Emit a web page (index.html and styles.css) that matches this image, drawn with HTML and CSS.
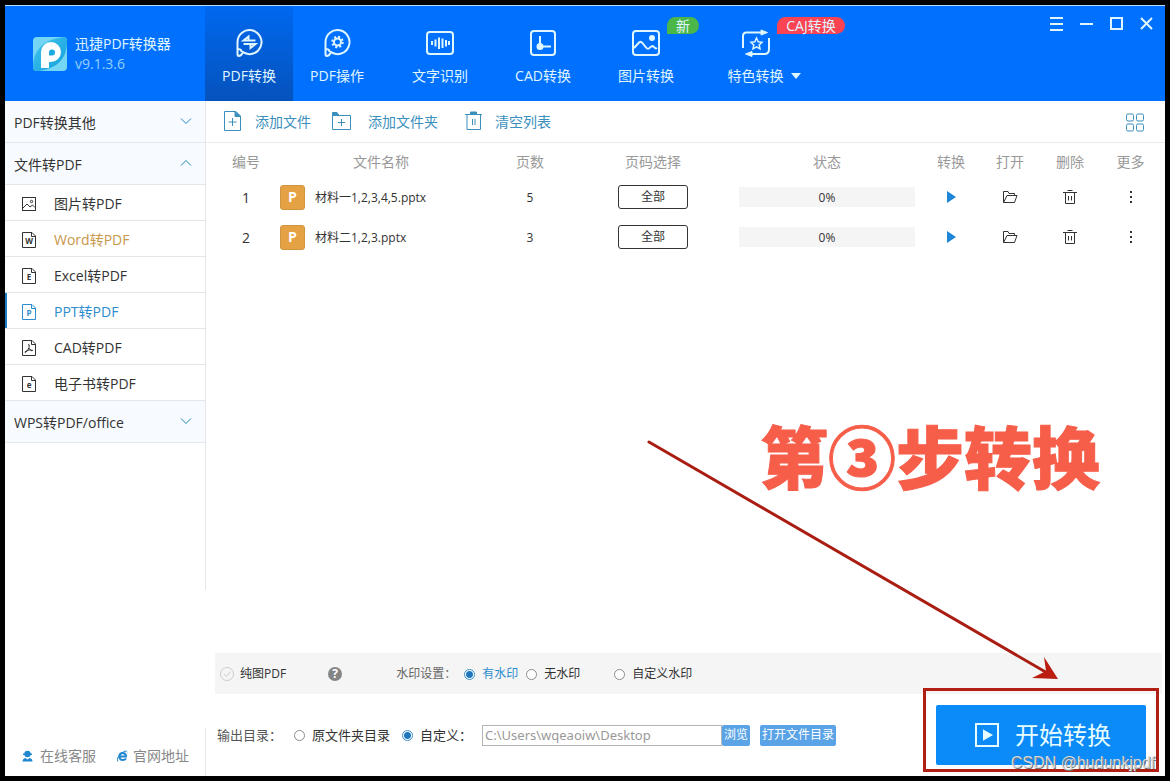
FILE: index.html
```html
<!DOCTYPE html>
<html lang="zh-CN">
<head>
<meta charset="utf-8">
<meta name="viewport" content="width=device-width, initial-scale=1">
<title>迅捷PDF转换器</title>
<link rel="stylesheet" href="styles.css">
</head>
<body>
<div class="app">
  <header class="header">
    <div class="brand">
      <svg class="logo" viewBox="0 0 34 34" aria-hidden="true">
        <defs><linearGradient id="lg" x1="0" y1="0" x2="1" y2="1"><stop offset="0" stop-color="#43c4ee"/><stop offset="1" stop-color="#12a0dc"/></linearGradient></defs>
        <rect width="34" height="34" rx="4" fill="#74d6f4"/>
        <path d="M0 30C0 12 12 2 31 0Q34 0 34 4C34 20 26 31 6 34H4Q0 34 0 30Z" fill="url(#lg)"/>
        <path d="M8 31V15A10 10 0 1 1 18 25H16V31Z" fill="#fff"/>
        <path d="M16 19V15.500A3 3 0 1 1 19 18.500H16Z" fill="#1ba9e1"/>
      </svg>
      <div class="brand-text">
        <h1 class="brand-name">迅捷PDF转换器</h1>
        <p class="brand-version">v9.1.3.6</p>
      </div>
    </div>
    <nav class="tabs">
      <button class="tab tab-active" type="button">
        <svg class="tab-icon" viewBox="0 0 28 28"><path d="M2.500 26V14A12 12 0 1 1 8 24.200Q6 28 3.800 28Q2.300 28 2.500 25M2.500 21.500Q6.500 20.500 6.500 24"/><path d="M20.500 12.500H8.500L13.500 8.500V12M8.500 16H20.500L15.500 20V16.500"/></svg>
        <span>PDF转换</span>
      </button>
      <button class="tab" type="button">
        <svg class="tab-icon" viewBox="0 0 28 28"><path d="M2.500 26V14A12 12 0 1 1 8 24.200Q6 28 3.800 28Q2.300 28 2.500 25M2.500 21.500Q6.500 20.500 6.500 24"/><circle cx="14.500" cy="14" r="3.500"/><circle cx="14.500" cy="14" r="5.200" stroke-dasharray="2.040 2.040" stroke-width="2"/></svg>
        <span>PDF操作</span>
      </button>
      <button class="tab tab-wide" type="button">
        <svg class="tab-icon" viewBox="0 0 28 28"><rect x="1" y="4" width="26" height="22" rx="3"/><path d="M6 13V17M9.500 11.500V18.500M13 9.500V21M16.500 10.500V20M20 12V18.500M23 13V17"/></svg>
        <span>文字识别</span>
      </button>
      <button class="tab" type="button">
        <svg class="tab-icon" viewBox="0 0 28 28"><rect x="2" y="3" width="24" height="24" rx="3"/><path d="M11 8V21M11 18.500H22"/><circle cx="11" cy="18.500" r="2.500" fill="currentColor"/></svg>
        <span>CAD转换</span>
      </button>
      <button class="tab tab-wide" type="button">
        <svg class="tab-icon" viewBox="0 0 28 28"><rect x="1" y="3" width="26" height="24" rx="3"/><path d="M2 20L7 14.500Q9 13 10.500 15L14 19.500Q16 22 18 19.500L19.500 18.500Q21 17.500 22.500 19.500Q23.500 21 25 20"/><circle cx="20" cy="10" r="2" fill="currentColor"/></svg>
        <span>图片转换</span>
        <span class="badge badge-new">新</span>
      </button>
      <button class="tab tab-wide tab-menu" type="button">
        <svg class="tab-icon" viewBox="0 0 28 28"><path d="M1 20V8Q1 4.500 4.500 4.500H21M27 10V21Q27 26 22.500 26H8"/><path d="M19 2L25.500 4.500L19 7ZM10 23.500L3.500 26L10 28.500Z" fill="currentColor" stroke-width="1"/><path d="M14.500 10L16.200 13.700L20 14.200L17.200 16.900L18 20.800L14.500 18.900L11 20.800L11.800 16.900L9 14.200L12.800 13.700Z" stroke-width="1.500"/></svg>
        <span>特色转换</span>
        <svg class="caret" viewBox="0 0 10 6"><path d="M0 0H10L5 6Z" fill="currentColor"/></svg>
        <span class="badge badge-caj">CAJ转换</span>
      </button>
    </nav>
    <div class="window-controls">
      <button class="win-btn" type="button" aria-label="菜单"><svg viewBox="0 0 14 14"><path d="M0 1H13M0 7H13M0 13H13"/></svg></button>
      <button class="win-btn" type="button" aria-label="最小化"><svg viewBox="0 0 14 14"><path d="M0 7H13"/></svg></button>
      <button class="win-btn" type="button" aria-label="最大化"><svg viewBox="0 0 14 14"><rect x="1" y="1" width="11" height="11"/></svg></button>
      <button class="win-btn" type="button" aria-label="关闭"><svg viewBox="0 0 14 14"><path d="M1 1L12 12M12 1L1 12"/></svg></button>
    </div>
  </header>

  <div class="body">
    <aside class="sidebar">
      <nav class="side-nav">
        <button class="group" type="button"><span>PDF转换其他</span><svg class="chevron" viewBox="0 0 12 8"><path d="M1 1.500L6 6.500L11 1.500"/></svg></button>
        <button class="group" type="button"><span>文件转PDF</span><svg class="chevron" viewBox="0 0 12 8"><path d="M1 6.500L6 1.500L11 6.500"/></svg></button>
        <ul class="side-list">
          <li><a class="side-item" href="#"><svg class="doc" viewBox="0 0 16 16"><rect x="1.500" y="1.500" width="13" height="13"/><path d="M2 12L6 8L9 11L11.500 9L14 11.500"/><circle cx="10.500" cy="5.500" r="1.200"/></svg>图片转PDF</a></li>
          <li><a class="side-item side-item-hover" href="#"><svg class="doc" viewBox="0 0 16 16"><path d="M1.500 .5H11L14.500 4V15.500H1.500ZM10.500 .5V4.500H14.500"/><text x="8" y="12" class="doc-letter">W</text></svg><span>Word转PDF</span></a></li>
          <li><a class="side-item" href="#"><svg class="doc" viewBox="0 0 16 16"><path d="M1.500 .5H11L14.500 4V15.500H1.500ZM10.500 .5V4.500H14.500"/><text x="8" y="12" class="doc-letter">E</text></svg>Excel转PDF</a></li>
          <li><a class="side-item side-item-active" href="#"><svg class="doc" viewBox="0 0 16 16"><path d="M1.500 .5H11L14.500 4V15.500H1.500ZM10.500 .5V4.500H14.500"/><text x="8" y="12" class="doc-letter">P</text></svg>PPT转PDF</a></li>
          <li><a class="side-item" href="#"><svg class="doc" viewBox="0 0 16 16"><path d="M1.500 .5H11L14.500 4V15.500H1.500ZM10.500 .5V4.500H14.500"/><path d="M7 4.500Q9 4 8 7.500Q7 11 4.500 12.500Q3 12.500 5 11Q8 9 12 10.500M7.800 8Q9 10 11 11"/></svg>CAD转PDF</a></li>
          <li><a class="side-item" href="#"><svg class="doc" viewBox="0 0 16 16"><path d="M1.500 .5H11L14.500 4V15.500H1.500ZM10.500 .5V4.500H14.500"/><text x="8" y="12" class="doc-letter">e</text></svg>电子书转PDF</a></li>
        </ul>
        <button class="group" type="button"><span>WPS转PDF/office</span><svg class="chevron" viewBox="0 0 12 8"><path d="M1 1.500L6 6.500L11 1.500"/></svg></button>
      </nav>
      <div class="side-footer">
        <a class="foot-link" href="#"><svg viewBox="0 0 11 12"><g fill="currentColor"><circle cx="5.500" cy="4" r="3.200"/><path d="M1 3.500H10V5H1ZM.5 11.500Q.5 8.500 3.500 8L5.500 9.500L7.500 8Q10.500 8.500 10.500 11.500Z"/></g></svg>在线客服</a>
        <a class="foot-link" href="#"><svg viewBox="0 0 11 12"><g stroke="currentColor" stroke-width="2"><path d="M2.500 6.500H9Q9 3 5.800 3Q2.500 3 2.300 6.500Q2.500 10 5.800 10Q8 10 9 8.500"/><path d="M1 11.500Q-1 8 4 3.500Q9 -.5 10.300 2" stroke-width="1"/></g></svg>官网地址</a>
      </div>
    </aside>

    <main class="main">
      <div class="toolbar">
        <button class="tool tool-file" type="button"><svg viewBox="0 0 20 22"><path d="M2.500 .5H14L18.500 5V19.500H2.500ZM10.500 7V15M6.500 11H14.500"/><path d="M13 .5V5.500H18.500Z" fill="currentColor"/></svg>添加文件</button>
        <button class="tool tool-folder" type="button"><svg viewBox="0 0 20 22"><path d="M.5 4.500H18.500V18.500H.5ZM9.500 8V15M6 11.500H13"/><path d="M.5 1.500H5L7 4.500H.5Z" fill="currentColor"/></svg>添加文件夹</button>
        <button class="tool tool-clear" type="button"><svg viewBox="0 0 20 22"><path d="M1 3.500H18M3 3.500V18.500H16.500V3.500M8.500 8V14M11 8V14"/><path d="M6.500 1H12.500V3.500H6.500Z" fill="currentColor"/></svg>清空列表</button>
        <button class="tool-grid" type="button" aria-label="视图"><svg viewBox="0 0 19 19"><rect x=".5" y="1.500" width="7" height="7" rx="1.500"/><rect x="10.500" y="1.500" width="7" height="7" rx="1.500"/><rect x=".5" y="11.500" width="7" height="7" rx="1.500"/><rect x="10.500" y="11.500" width="7" height="7" rx="1.500"/></svg></button>
      </div>

      <table class="files">
        <colgroup><col class="c-no"><col class="c-name"><col class="c-pages"><col class="c-range"><col class="c-state"><col class="c-run"><col class="c-open"><col class="c-del"><col class="c-more"></colgroup>
        <thead><tr><th class="no">编号</th><th>文件名称</th><th>页数</th><th>页码选择</th><th>状态</th><th>转换</th><th>打开</th><th>删除</th><th>更多</th></tr></thead>
        <tbody>
          <tr>
            <td class="no">1</td>
            <td><div class="file"><span class="ppt">P</span><span class="file-name">材料一1,2,3,4,5.pptx</span></div></td>
            <td class="pages">5</td>
            <td><button class="range" type="button">全部</button></td>
            <td><div class="progress">0%</div></td>
            <td><button class="act act-run" type="button" aria-label="转换"><svg viewBox="0 0 16 16"><path d="M4 2L13 8L4 14Z" fill="currentColor" stroke="none"/></svg></button></td>
            <td><button class="act" type="button" aria-label="打开"><svg viewBox="0 0 16 16"><path d="M1.500 13.500V2.500H6L7 4.500H12.500V6.500M1.500 13.500L5 6.500H15L12.500 13.500Z"/></svg></button></td>
            <td><button class="act" type="button" aria-label="删除"><svg viewBox="0 0 16 16"><path d="M1 3.500H15M5.500 1.500H10.500M3.500 3.500V14.500H12.500V3.500M6.500 7V11.500M9.500 7V11.500"/></svg></button></td>
            <td><button class="act" type="button" aria-label="更多"><svg viewBox="0 0 16 16"><path d="M7 2H9V4H7ZM7 7H9V9H7ZM7 12H9V14H7Z" fill="currentColor" stroke="none"/></svg></button></td>
          </tr>
          <tr>
            <td class="no">2</td>
            <td><div class="file"><span class="ppt">P</span><span class="file-name">材料二1,2,3.pptx</span></div></td>
            <td class="pages">3</td>
            <td><button class="range" type="button">全部</button></td>
            <td><div class="progress">0%</div></td>
            <td><button class="act act-run" type="button" aria-label="转换"><svg viewBox="0 0 16 16"><path d="M4 2L13 8L4 14Z" fill="currentColor" stroke="none"/></svg></button></td>
            <td><button class="act" type="button" aria-label="打开"><svg viewBox="0 0 16 16"><path d="M1.500 13.500V2.500H6L7 4.500H12.500V6.500M1.500 13.500L5 6.500H15L12.500 13.500Z"/></svg></button></td>
            <td><button class="act" type="button" aria-label="删除"><svg viewBox="0 0 16 16"><path d="M1 3.500H15M5.500 1.500H10.500M3.500 3.500V14.500H12.500V3.500M6.500 7V11.500M9.500 7V11.500"/></svg></button></td>
            <td><button class="act" type="button" aria-label="更多"><svg viewBox="0 0 16 16"><path d="M7 2H9V4H7ZM7 7H9V9H7ZM7 12H9V14H7Z" fill="currentColor" stroke="none"/></svg></button></td>
          </tr>
        </tbody>
      </table>

      <div class="options">
        <label class="check"><input class="check-box" type="checkbox"><svg class="check-mark" viewBox="0 0 14 14"><circle cx="7" cy="7" r="6.500"/><path d="M4 7L6.500 9.500L10.500 4.500"/></svg>纯图PDF</label>
        <button class="help" type="button" aria-label="帮助">?</button>
        <span class="options-title">水印设置：</span>
        <label class="radio radio-on"><input type="radio" name="mark" checked>有水印</label>
        <label class="radio"><input type="radio" name="mark">无水印</label>
        <label class="radio radio-custom"><input type="radio" name="mark">自定义水印</label>
      </div>

      <div class="output">
        <span class="output-title">输出目录：</span>
        <label class="radio"><input type="radio" name="dir">原文件夹目录</label>
        <label class="radio"><input type="radio" name="dir" checked>自定义：</label>
        <div class="path">
          <input class="path-input" type="text" aria-label="输出目录" value="C:\Users\wqeaoiw\Desktop">
          <button class="small-btn" type="button">浏览</button>
        </div>
        <button class="small-btn open-dir" type="button">打开文件目录</button>
        <div class="start-wrap">
          <button class="start" type="button"><svg viewBox="0 0 24 24"><rect x="1" y="1" width="22" height="22"/><path d="M9 8L16 12L9 16Z" fill="currentColor"/></svg>开始转换</button>
        </div>
      </div>

      <p class="step">第③步转换</p>
      <svg class="arrow" viewBox="0 0 412 242" aria-hidden="true"><path d="M2 2L402 234" stroke="#aa1d12" stroke-width="3" stroke-linecap="round"/><path d="M411 239L385 238L399 231L397 217Z" fill="#bb1e10"/></svg>
      <p class="watermark">CSDN @hudunkjpdf</p>
    </main>
  </div>
</div>
</body>
</html>
```
FILE: styles.css
```css
* { box-sizing: border-box; }

body {
  margin: 0;
  padding: 5px;
  min-height: 100vh;
  display: flex;
  background: #000;
  color: #333;
  font: 14px/20px "Open Sans", "Noto Sans CJK SC", sans-serif;
}

button, input { font: inherit; color: inherit; }
button { margin: 0; padding: 0; border: 0; background: none; cursor: pointer; }
a { color: inherit; text-decoration: none; }
h1, p, ul { margin: 0; padding: 0; }
ul { list-style: none; }
svg { display: block; flex: none; fill: none; overflow: visible; }

.app { flex: 1; display: flex; flex-direction: column; background: #fff; }

/* Header */
.header {
  display: flex;
  height: 96px;
  background: #0071ff;
  border-top: 1px solid #b5dcff;
  color: #e0f6ff;
}
.brand { width: 200px; display: flex; align-items: center; gap: 8px; padding-left: 28px; }
.logo { width: 34px; height: 34px; }
.brand-name { font-size: 14px; font-weight: 400; line-height: 20px; }
.brand-version { color: #94cdff; line-height: 20px; }
.tabs { display: flex; flex: 1; }
.tab {
  position: relative;
  width: 88px;
  display: flex;
  flex-direction: column;
  align-items: center;
  gap: 10px;
  padding-top: 22px;
}
.tab-wide { width: 118px; }
.tab-active { background: linear-gradient(#0068f0, #0552bb); }
.tab-icon { width: 28px; height: 28px; stroke: currentColor; stroke-width: 2; }
.tab-menu {
  display: grid;
  grid-template-columns: auto auto;
  justify-content: center;
  align-content: start;
  justify-items: center;
  column-gap: 7px;
}
.tab-menu .tab-icon { grid-column: 1; }
.tab-menu span:not(.badge) { grid-column: 1; }
.caret { width: 10px; height: 6px; align-self: center; }
.badge {
  position: absolute;
  top: 11px;
  height: 17px;
  line-height: 17px;
  border-radius: 9px 9px 9px 0;
  text-align: center;
}
.badge-new { left: 80px; width: 32px; background: #4cb749; }
.badge-caj { left: 72px; width: 68px; background: #fb4353; }
.window-controls { display: flex; gap: 16px; padding: 11px 11px 0 0; align-self: flex-start; }
.win-btn svg { width: 14px; height: 14px; stroke: currentColor; stroke-width: 2; }

/* Sidebar */
.body { flex: 1; display: flex; }
.sidebar { width: 201px; display: flex; flex-direction: column; justify-content: space-between; }
.side-nav { flex: 1; margin-bottom: 138px; border-right: 1px solid #e3e7ea; }
.group {
  width: 100%;
  height: 42px;
  display: flex;
  align-items: center;
  justify-content: space-between;
  padding: 2px 13px 0 9px;
  background: #f7fafe;
  border-bottom: 1px solid #e3e7eb;
}
.chevron { width: 12px; height: 8px; margin-bottom: 4px; stroke: #2389bd; }
.side-item {
  height: 36px;
  display: flex;
  align-items: center;
  gap: 17px;
  padding: 2px 0 0 16px;
  border-bottom: 1px solid #e3e7eb;
}
.side-item-hover span { color: #c8974a; }
.side-item-active { color: #2c8dcf; box-shadow: inset 2px 0 #1b7cc4; }
.doc { width: 16px; height: 16px; stroke: currentColor; }
.doc-letter { font-size: 8px; font-weight: 700; text-anchor: middle; fill: currentColor; stroke: none; }
.side-footer {
  height: 48px;
  display: flex;
  gap: 21px;
  padding: 18px 0 0 17px;
  border-right: 1px solid #e3e7ea;
  color: #888;
}
.foot-link { display: flex; gap: 7px; height: 20px; align-items: center; }
.foot-link svg { width: 11px; height: 12px; color: #2187cf; }
.foot-link + .foot-link { gap: 5px; }

/* Main area */
.main { position: relative; flex: 1; display: flex; flex-direction: column; }
.toolbar {
  height: 42px;
  display: flex;
  align-items: center;
  gap: 21px;
  padding: 0 20px 0 16px;
  border-bottom: 1px solid #e8eaec;
  color: #3a8fbd;
}
.tool { display: flex; align-items: center; gap: 13px; }
.tool svg { width: 20px; height: 22px; stroke: currentColor; }
.tool-folder { gap: 16px; }
.tool-clear { gap: 11px; margin-left: 5px; }
.tool-grid { margin-left: auto; }
.tool-grid svg { width: 19px; height: 20px; stroke: currentColor; }

.files { width: 100%; table-layout: fixed; border-collapse: collapse; text-align: center; font-size: 12px; }
.files th { height: 34px; padding: 4px 0 0; font-size: 14px; font-weight: 400; color: #999; }
.files td { height: 40px; padding: 0; }
.files .no { padding-left: 6px; }
.files td.no { font-size: 14px; padding-top: 2px; }
.files td.pages { padding-top: 2px; }
.c-no { width: 74px; }
.c-pages { width: 96px; }
.c-range { width: 150px; }
.c-state { width: 198px; }
.c-run { width: 50px; }
.c-open { width: 68px; }
.c-del { width: 52px; }
.c-more { width: 69px; }
.file { display: flex; align-items: center; gap: 10px; }
.file-name { padding-top: 2px; }
.ppt {
  width: 25px;
  height: 25px;
  border: 1px solid #cf963f;
  border-radius: 3px;
  background: #e5a244;
  color: #fff;
  font-size: 14px;
  font-weight: 700;
  line-height: 22px;
}
.range { width: 70px; height: 24px; border: 1px solid #333; border-radius: 3px; background: #fff; }
.progress { height: 20px; margin: 0 11px; background: #f5f5f5; line-height: 21px; }
.act { display: block; margin: 0 auto; }
.act svg { width: 16px; height: 16px; stroke: currentColor; }
.act-run { color: #1d86d8; }

.options {
  height: 41px;
  display: flex;
  align-items: center;
  margin: auto 3px 0 9px;
  padding: 1px 0 0 5px;
  background: #f5f5f5;
  font-size: 12px;
}
.check { display: flex; align-items: center; gap: 6px; }
.check-box { position: absolute; opacity: 0; }
.check-mark { width: 14px; height: 14px; stroke: #ccc; }
.help {
  width: 14px;
  height: 14px;
  margin-left: 42px;
  border-radius: 50%;
  background: #858585;
  color: #fff;
  font-weight: 700;
  line-height: 14px;
}
.options-title { margin-left: 54px; color: #666; }
.radio { display: flex; align-items: center; gap: 7px; }
.options .radio { margin-left: 8px; }
.options .radio-custom { margin-left: 34px; }
.options .radio-on { color: #2c8dcf; }
.radio input {
  appearance: none;
  width: 11px;
  height: 11px;
  margin: 0;
  border: 1px solid #8c8c8c;
  border-radius: 50%;
  background: #fff;
}
.radio input:checked { border-color: #3c8ecb; background: radial-gradient(circle, #1f78bf 3px, #fff 4px); }

.output { height: 82px; display: flex; align-items: center; gap: 12px; padding: 0 19px 0 11px; font-size: 13px; }
.output-title { color: #555; }
.path { display: flex; margin-left: -2px; }
.path-input {
  width: 240px;
  height: 21px;
  padding: 0 2px;
  border: 1px solid #b5b5b5;
  background: #fff;
  color: #999;
  font-family: "Noto Sans", sans-serif;
  font-size: 12px;
}
.small-btn { height: 21px; padding: 0 2px; border-radius: 2px; background: #5aa3e6; color: #fff; font-size: 12px; }
.path-input { font-size: 13px; }
.open-dir { margin-left: -2px; }
.start-wrap { position: relative; margin-left: auto; }
.start-wrap::after {
  content: "";
  position: absolute;
  inset: -17px -13px -7px;
  border: 3px solid #b11f14;
  pointer-events: none;
}
.start {
  width: 210px;
  height: 60px;
  display: flex;
  align-items: center;
  gap: 16px;
  padding-left: 39px;
  border-radius: 2px;
  background: #0a8bf8;
  color: #e6fcff;
  font-size: 24px;
}
.start svg { width: 24px; height: 24px; stroke: currentColor; stroke-width: 2; }

/* Annotations over the page */
.step {
  position: absolute;
  right: 65px;
  bottom: 281px;
  color: #f65e4a;
  font-family: "Noto Sans CJK SC", sans-serif;
  font-size: 68px;
  font-weight: 900;
  line-height: 80px;
  -webkit-text-stroke: 1px #f65e4a;
}
.arrow { position: absolute; right: 106px; bottom: 94px; width: 412px; height: 242px; }
.watermark {
  position: absolute;
  right: 10px;
  bottom: 3px;
  color: #d5d9dd;
  font-family: "Liberation Sans", sans-serif;
  font-size: 16px;
  text-shadow: 1px 1px #777;
}
```
